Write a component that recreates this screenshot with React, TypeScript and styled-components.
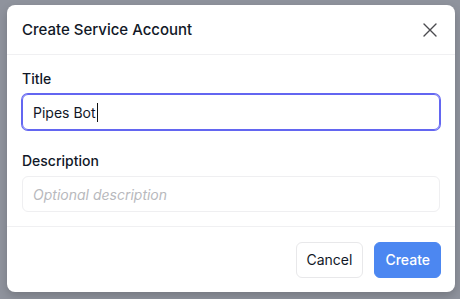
import React from "react"
import styled, { createGlobalStyle } from "styled-components"

const Global = createGlobalStyle`
  html, body {
    margin: 0;
    padding: 0;
    background-color: #8f939d;
    font-family: Inter, "Noto Sans", "Liberation Sans", sans-serif;
  }
`

const Overlay = styled.div`
  width: 460px;
  height: 299px;
  padding: 5px 0 0 7px;
  box-sizing: border-box;
`

const Dialog = styled.div`
  width: 448px;
  height: 287px;
  background-color: #ffffff;
  border-radius: 8px;
  box-shadow: 0 4px 10px rgba(0, 0, 0, 0.18);
  display: flex;
  flex-direction: column;
  overflow: hidden;
`

const Header = styled.div`
  height: 49px;
  display: flex;
  align-items: center;
  justify-content: space-between;
  padding: 0 15px;
  border-bottom: 1px solid #f0f0f2;
`

const Heading = styled.h2`
  margin: 0;
  font-size: 15px;
  font-weight: 500;
  color: #111827;
`

const Close = styled.button`
  width: 20px;
  height: 20px;
  padding: 0;
  border: none;
  background: none;
  display: flex;
  align-items: center;
  justify-content: center;
  cursor: pointer;
`

const Body = styled.div`
  flex: 1;
  padding: 14px 15px 0;
  display: flex;
  flex-direction: column;
  border-bottom: 1px solid #f0f0f2;
`

const Field = styled.div<{ $gap?: number }>`
  display: flex;
  flex-direction: column;
  margin-bottom: ${(p) => p.$gap ?? 0}px;
`

const Label = styled.label`
  font-size: 14px;
  line-height: 20px;
  font-weight: 500;
  color: #111827;
  margin-bottom: 5px;
`

const Input = styled.div<{ $focused?: boolean }>`
  height: 36px;
  box-sizing: border-box;
  border-radius: 6px;
  border: 1px solid ${(p) => (p.$focused ? "#6366f1" : "#efeff1")};
  box-shadow: ${(p) => (p.$focused ? "0 0 0 1px #6366f1" : "none")};
  display: flex;
  align-items: center;
  padding: 0 10px;
  font-size: 14px;
  color: #111827;
`

const Placeholder = styled.span`
  color: #b8b9bd;
  font-style: italic;
`

const Caret = styled.span`
  display: inline-block;
  width: 1px;
  height: 19px;
  background-color: #111;
  margin-left: 1px;
`

const Footer = styled.div`
  height: 65px;
  display: flex;
  align-items: center;
  justify-content: flex-end;
  gap: 11px;
  padding: 0 14px 0 0;
`

const Button = styled.button<{ $primary?: boolean }>`
  height: 36px;
  padding: 0 10px;
  border-radius: 6px;
  font-family: inherit;
  font-size: 14px;
  font-weight: ${(p) => (p.$primary ? 500 : 400)};
  border: 1px solid ${(p) => (p.$primary ? "#4c87f1" : "#e8e8ea")};
  background-color: ${(p) => (p.$primary ? "#4c87f1" : "#ffffff")};
  color: ${(p) => (p.$primary ? "#ffffff" : "#111827")};
  cursor: pointer;
`

const App = () => {
  return (
    <>
      <Global />
      <Overlay>
        <Dialog>
          <Header>
            <Heading>Create Service Account</Heading>
            <Close>
              <svg width="14" height="14" viewBox="0 0 14 14" fill="none">
                <path d="M1 1L13 13M13 1L1 13" stroke="#4b4b4f" strokeWidth="1.4" strokeLinecap="round" />
              </svg>
            </Close>
          </Header>
          <Body>
            <Field $gap={21}>
              <Label>Title</Label>
              <Input $focused>
                Pipes Bot
                <Caret />
              </Input>
            </Field>
            <Field>
              <Label>Description</Label>
              <Input>
                <Placeholder>Optional description</Placeholder>
              </Input>
            </Field>
          </Body>
          <Footer>
            <Button>Cancel</Button>
            <Button $primary>Create</Button>
          </Footer>
        </Dialog>
      </Overlay>
    </>
  )
}

export default App
